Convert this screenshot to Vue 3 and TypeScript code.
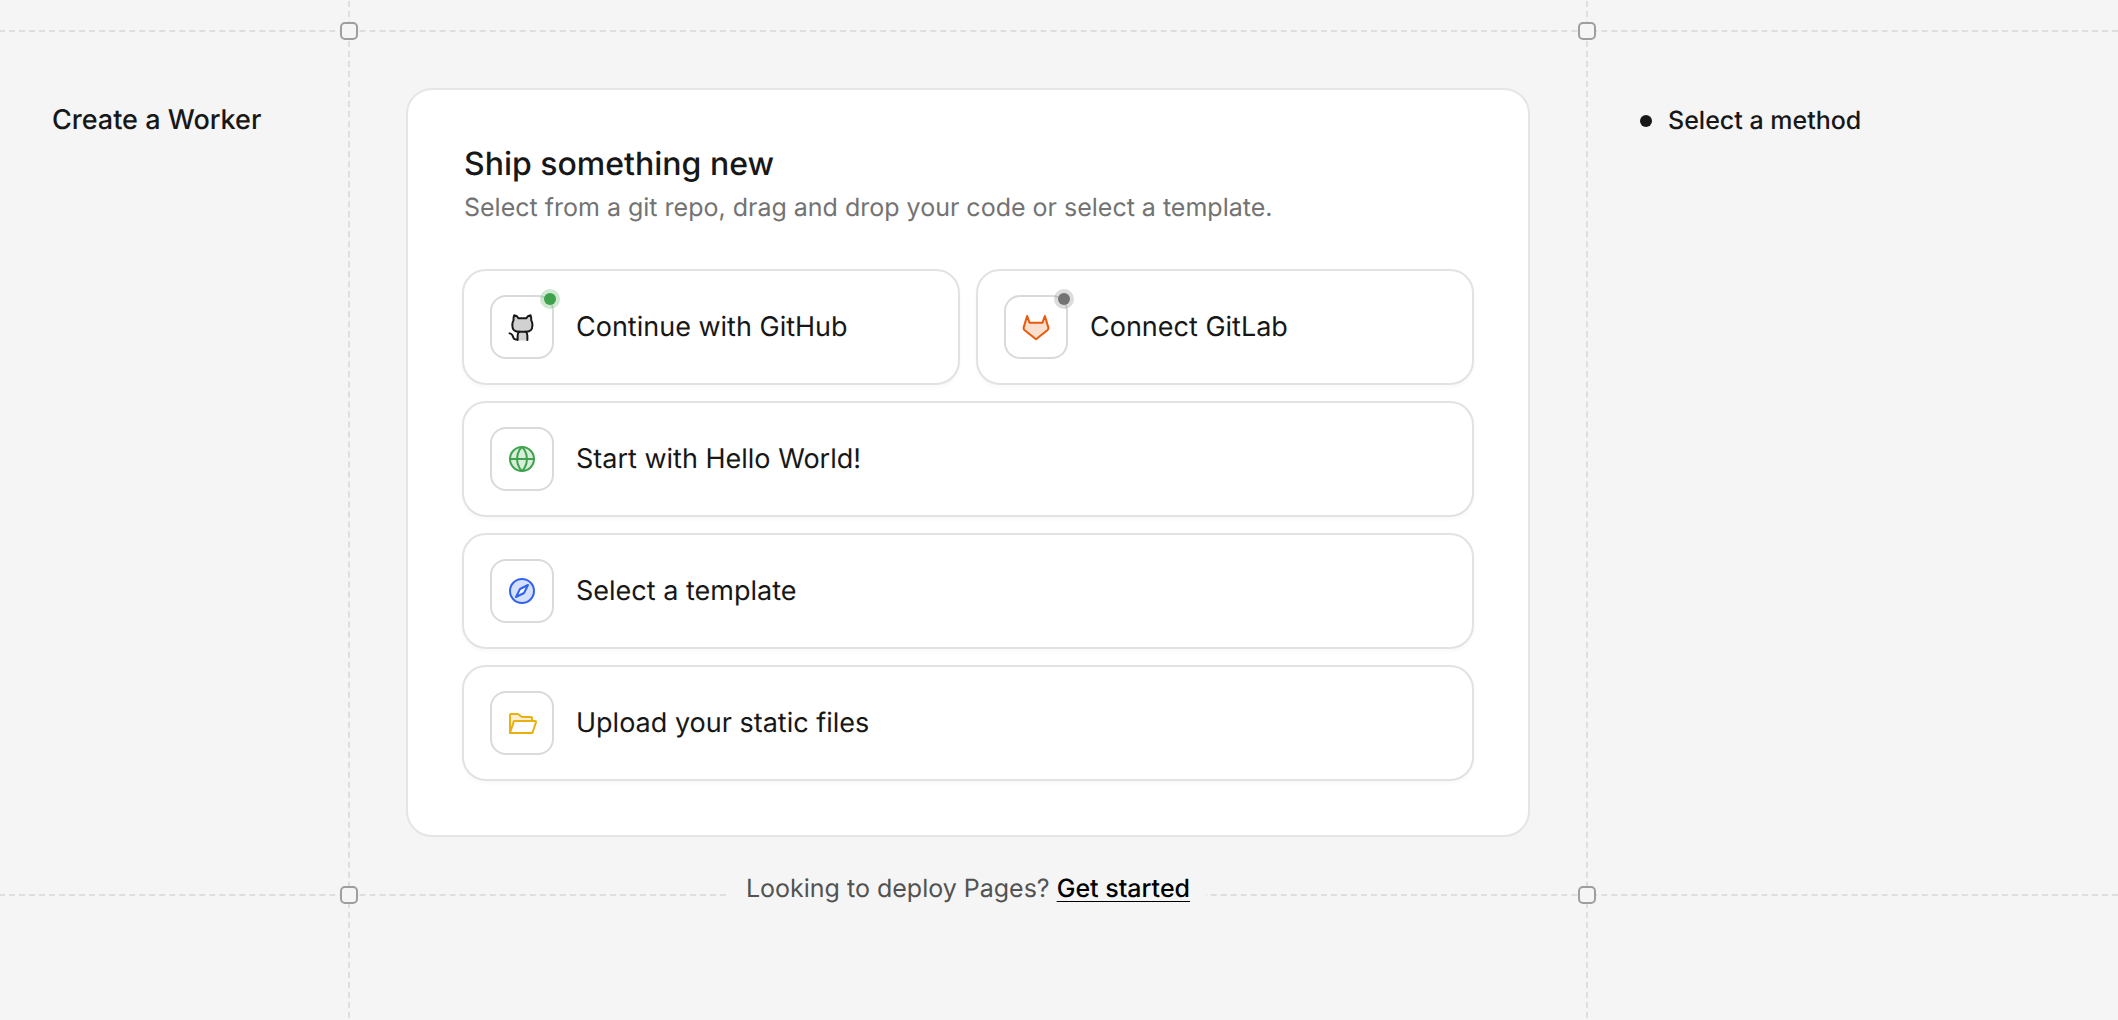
<script setup lang="ts">
type IconName = 'github' | 'gitlab' | 'globe' | 'compass' | 'folder'

interface Method {
  id: IconName
  label: string
  color: string
  half?: boolean
  status?: string
}

const methods: Method[] = [
  { id: 'github', label: 'Continue with GitHub', color: '#171717', half: true, status: '#3fa34d' },
  { id: 'gitlab', label: 'Connect GitLab', color: '#e8590c', half: true, status: '#737373' },
  { id: 'globe', label: 'Start with Hello World!', color: '#3fa34d' },
  { id: 'compass', label: 'Select a template', color: '#2f62f0' },
  { id: 'folder', label: 'Upload your static files', color: '#eab010' },
]
</script>

<template>
  <div class="page">
    <div class="rail rail-left" aria-hidden="true"></div>
    <div class="rail rail-right" aria-hidden="true"></div>

    <div class="rule" aria-hidden="true">
      <span class="node node-left"></span>
      <span class="node node-right"></span>
    </div>

    <div class="columns">
      <aside class="side">
        <h1 class="page-title">Create a Worker</h1>
      </aside>

      <main class="center">
        <section class="card">
          <h2 class="card-title">Ship something new</h2>
          <p class="card-text">Select from a git repo, drag and drop your code or select a template.</p>

          <div class="methods">
            <button
              v-for="m in methods"
              :key="m.id"
              type="button"
              class="method"
              :class="{ half: m.half }"
            >
              <span class="tile" :style="{ color: m.color }">
                <svg class="icon" viewBox="0 0 256 256" aria-hidden="true">
                  <template v-if="m.id === 'github'">
                    <path class="tint" d="M100 58C92 44 80 36 66 34Q58 48 60 76C54 84 51 94 51 106v12c0 28 18 47 46 47h68c28 0 46-19 46-47v-12c0-12-3-22-9-30Q204 48 196 34C182 36 170 44 162 58ZM93 236v-38q0-20 12-33h54q12 13 12 33v38Z" />
                    <path d="M100 58C92 44 80 36 66 34Q58 48 60 76C54 84 51 94 51 106v12c0 28 18 47 46 47h68c28 0 46-19 46-47v-12c0-12-3-22-9-30Q204 48 196 34C182 36 170 44 162 58Z" />
                    <path d="M93 232v-34q0-20 12-33M171 232v-34q0-20-12-33M29 179c20 2 24 14 28 28 3 14 8 20 20 20h16" />
                  </template>
                  <template v-else-if="m.id === 'gitlab'">
                    <path class="tint" d="M57 40 76 93h104l19-53 28 93c1 8-1 14-6 19l-93 74-93-74c-5-5-7-11-6-19Z" />
                    <path d="M57 40 76 93h104l19-53 28 93c1 8-1 14-6 19l-93 74-93-74c-5-5-7-11-6-19Z" />
                  </template>
                  <template v-else-if="m.id === 'globe'">
                    <circle class="tint" cx="128" cy="128" r="96" />
                    <circle cx="128" cy="128" r="96" />
                    <path d="M168 128c0 64-40 96-40 96s-40-32-40-96 40-96 40-96 40 32 40 96ZM32 128h192" />
                  </template>
                  <template v-else-if="m.id === 'compass'">
                    <path class="tint" fill-rule="evenodd" d="M128 32a96 96 0 1 0 0 192 96 96 0 0 0 0-192Zm16 112-64 32 32-64 64-32Z" />
                    <circle cx="128" cy="128" r="96" />
                    <path d="m144 144-64 32 32-64 64-32Z" />
                  </template>
                  <template v-else>
                    <path class="tint" d="M208 88v24H69.8a8 8 0 0 0-7.6 5.5L32 208V64a8 8 0 0 1 8-8h53.3a8 8 0 0 1 4.8 1.6l27.8 20.8a8 8 0 0 0 4.8 1.6H200a8 8 0 0 1 8 8Z" />
                    <path d="M32 208V64a8 8 0 0 1 8-8h53.3a8 8 0 0 1 4.8 1.6l27.8 20.8a8 8 0 0 0 4.8 1.6H200a8 8 0 0 1 8 8v24" />
                    <path d="m32 208 30.2-90.5a8 8 0 0 1 7.6-5.5H232a8 8 0 0 1 7.6 10.5L211 208Z" />
                  </template>
                </svg>
                <span v-if="m.status" class="status" :style="{ color: m.status }"></span>
              </span>
              <span class="label">{{ m.label }}</span>
            </button>
          </div>
        </section>

        <p class="hint">Looking to deploy Pages? <a class="link" href="#">Get started</a></p>
      </main>

      <aside class="side side-right">
        <ol class="steps">
          <li class="step">Select a method</li>
        </ol>
      </aside>
    </div>

    <div class="rule rule-bottom" aria-hidden="true">
      <span class="node node-left"></span>
      <span class="node node-right"></span>
    </div>
  </div>
</template>

<style>
body {
  margin: 0;
  background: #f5f5f5;
}
</style>

<style scoped>
.page {
  --left: 350px;
  --right: 532px;
  position: relative;
  box-sizing: border-box;
  min-height: 100vh;
  padding: 30px 0 120px;
  overflow: hidden;
  background: #f5f5f5;
  color: #171717;
  font-family: Inter, "Liberation Sans", sans-serif;
  text-rendering: geometricPrecision;
}

h1,
h2,
p,
ol {
  margin: 0;
  padding: 0;
}

/* dashed guides */
.rail {
  position: absolute;
  top: -9px;
  bottom: -8px;
  border-left: 2px dashed #dedede;
}

.rail-left {
  left: calc(var(--left) - 2px);
}

.rail-right {
  right: calc(var(--right) - 2px);
}

.rule {
  position: relative;
  margin-left: -1px;
  border-top: 2px dashed #dedede;
}

.rule-bottom {
  margin-top: -11px;
}

.node {
  position: absolute;
  top: -10px;
  box-sizing: border-box;
  width: 18px;
  height: 18px;
  border: 2px solid #9e9e9e;
  border-radius: 5px;
  background: #f5f5f5;
}

.node-left {
  left: calc(var(--left) - 9px);
}

.node-right {
  right: calc(var(--right) - 10px);
}

/* columns */
.columns {
  display: grid;
  grid-template-columns: var(--left) minmax(0, 1fr) var(--right);
}

.side {
  box-sizing: border-box;
  padding: 68px 52px 0;
}

.side-right {
  padding: 69px 54px 0;
}

.page-title {
  font-size: 27px;
  font-weight: 500;
  line-height: 40px;
}

.steps {
  list-style: none;
}

.step {
  display: flex;
  align-items: center;
  gap: 16px;
  font-size: 25px;
  font-weight: 500;
  line-height: 40px;
}

.step::before {
  content: "";
  width: 12px;
  height: 12px;
  border-radius: 50%;
  background: #171717;
}

.center {
  display: flex;
  flex-direction: column;
  align-items: center;
  padding: 56px 56px 0;
}

.card {
  box-sizing: border-box;
  width: 100%;
  padding: 54px;
  border: 2px solid #e5e5e5;
  border-radius: 26px;
  background: #fff;
}

.card-title {
  padding: 0 2px;
  font-size: 32px;
  font-weight: 500;
  line-height: 40px;
}

.card-text {
  margin-top: 4px;
  padding: 0 2px;
  color: #737373;
  font-size: 25px;
  line-height: 40px;
}

.methods {
  display: grid;
  grid-template-columns: 1fr 1fr;
  gap: 16px;
  margin-top: 41px;
}

.method {
  display: flex;
  grid-column: span 2;
  align-items: center;
  gap: 22px;
  padding: 24px 26px;
  border: 2px solid #e2e2e2;
  border-radius: 24px;
  background: #fff;
  box-shadow: 0 2px 4px rgba(0, 0, 0, 0.03);
  color: inherit;
  font: inherit;
  text-align: left;
  text-rendering: inherit;
  cursor: pointer;
}

.half {
  grid-column: span 1;
}

.tile {
  position: relative;
  display: flex;
  box-sizing: border-box;
  width: 64px;
  height: 64px;
  align-items: center;
  justify-content: center;
  border: 2px solid #dadada;
  border-radius: 16px;
}

.icon {
  width: 32px;
  height: 32px;
  fill: none;
  stroke: currentColor;
  stroke-width: 16;
  stroke-linecap: round;
  stroke-linejoin: round;
}

.tint {
  fill: currentColor;
  stroke: none;
  opacity: 0.2;
}

.status {
  position: absolute;
  top: -8px;
  right: -8px;
  width: 20px;
  height: 20px;
  border-radius: 50%;
}

.status::before,
.status::after {
  content: "";
  position: absolute;
  inset: 0;
  border-radius: 50%;
  background: currentColor;
  opacity: 0.25;
}

.status::after {
  inset: 4px;
  opacity: 1;
}

.label {
  font-size: 27px;
  line-height: 40px;
}

.hint {
  position: relative;
  z-index: 1;
  margin-top: 36px;
  padding: 0 16px;
  background: #f5f5f5;
  color: #525252;
  font-size: 25px;
  line-height: 32px;
}

.link {
  color: #000;
  font-weight: 500;
  text-decoration: underline;
  text-decoration-thickness: 1px;
  text-underline-offset: 4px;
}
</style>
